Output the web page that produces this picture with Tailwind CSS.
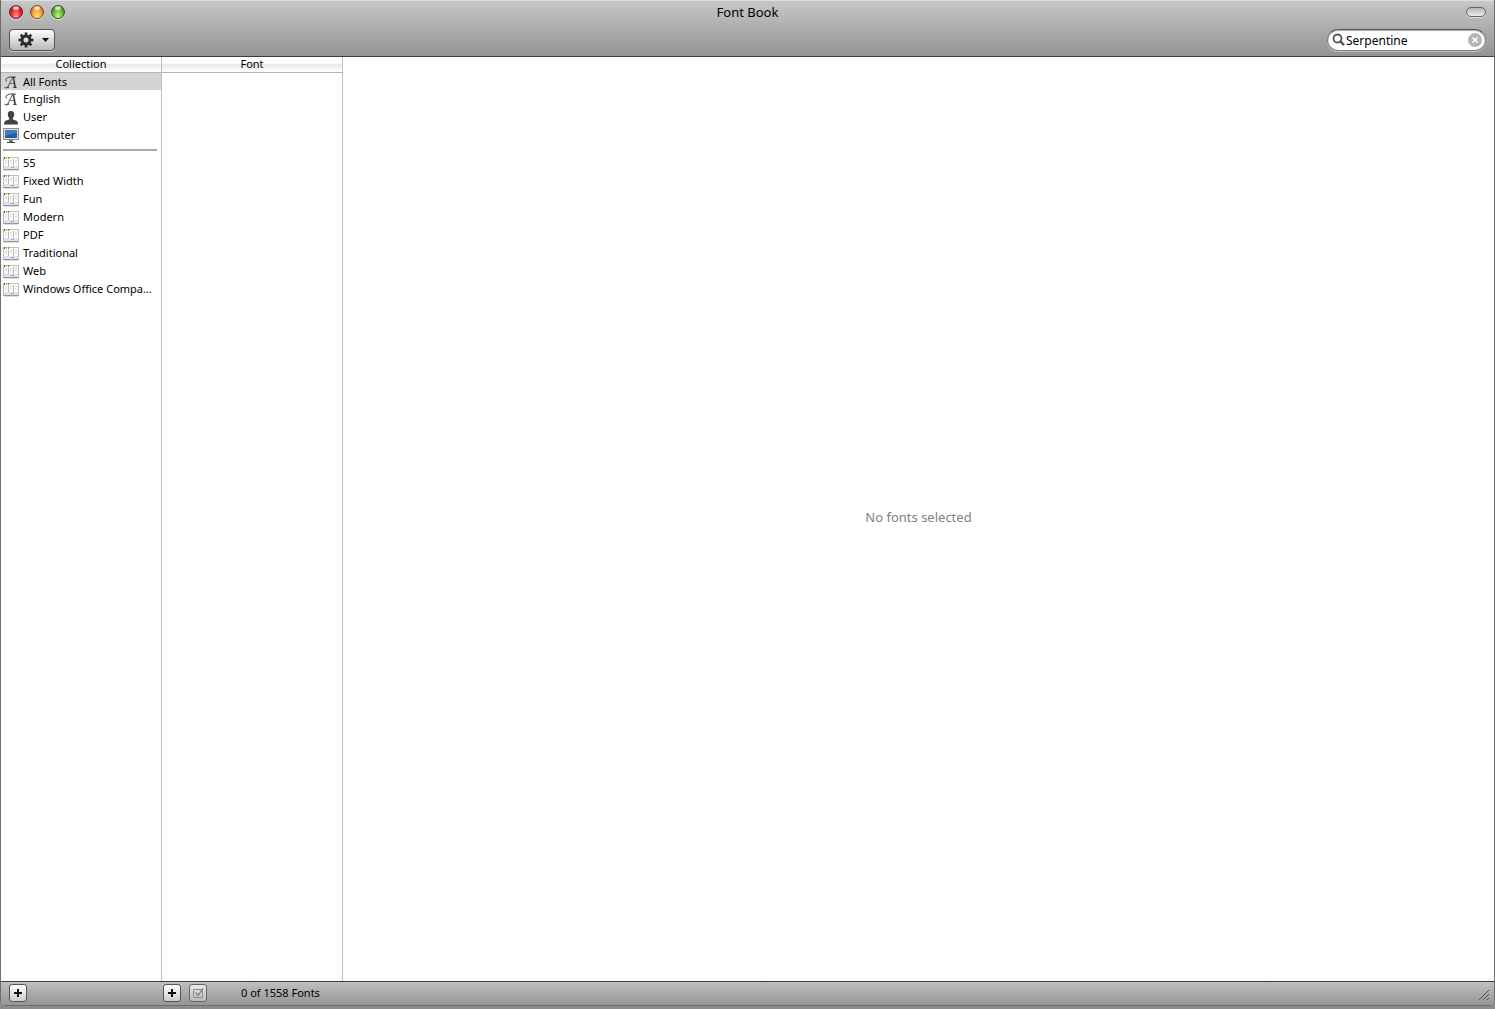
<!DOCTYPE html>
<html lang="en">

<head>
    <meta charset="UTF-8">
    <meta name="viewport" content="width=device-width, initial-scale=1.0">
    <script src="https://cdn.jsdelivr.net/npm/@tailwindcss/browser@4"></script>
    <title>Font Book</title>
</head>

<body class="h-screen overflow-hidden bg-[#8c8c8c] pb-[3px] font-['Noto_Sans','Open_Sans',sans-serif] text-[11px] text-black">
    <!-- shared icons -->
    <svg class="hidden">
        <symbol id="script-a" viewBox="0 0 16 16">
            <text x="4" y="14" font-family="Liberation Serif, serif" font-style="italic" font-size="16" fill="#333">A</text>
            <path d="M13 3.200C9 2.600 5.200 2.800 3.400 4.600c-1 1.200-.6 2.600.6 2.500M5.500 12.500c-.9 1.500-2.600 1.900-4 .8" fill="none" stroke="#444" />
        </symbol>
        <symbol id="collection" viewBox="0 0 16 16">
            <path d="M0 14h16v1H0z" fill="#999" />
            <path d="M1 15h14v1H1z" fill="#ddd" />
            <path d="M.5 2.500h15v11H.5z" fill="#fafafa" stroke="#bdbdbd" />
            <path d="M1 11h14v3H1z" fill="#e2e2e2" />
            <path d="M1 2h1v2H1z" fill="#e02020" />
            <path d="M3 2h1v2H3z" fill="#f4b90d" />
            <path d="M5 2h1v2H5z" fill="#25b535" />
            <path d="M5.500 5v6M10.500 4v7" fill="none" stroke="#bbb" />
            <path d="M2 5.500h2M7 5.500h2M12 5.500h2M2 7.500h2M7 7.500h2M12 7.500h2" fill="none" stroke="#dcdcdc" />
            <path d="M8 12h3v1H8z" fill="#78a8ee" />
        </symbol>
        <symbol id="plus" viewBox="0 0 16 16">
            <path d="M4 8h8M8 4v8" stroke="#111" stroke-width="2" />
        </symbol>
    </svg>

    <div class="flex h-full flex-col overflow-hidden rounded-b-[5px] border-x border-b border-[#6e6e6e] bg-white">
        <header class="h-[57px] shrink-0 border-b border-[#3d3d3d] bg-linear-to-b from-[#c8c8c8] to-[#939393] shadow-[inset_0_1px_0_#dedede]">
            <div class="grid h-6 grid-cols-3 items-center px-2">
                <div class="flex gap-[7px]">
                    <button aria-label="Close" class="relative size-3.5 overflow-hidden rounded-full border border-[#6d2020] bg-radial-[at_50%_85%] from-[#ff9c9c] via-[#ef3131] to-[#8c0d0d] shadow-[0_1px_0_#ddd]"><span class="absolute inset-x-[3px] top-0 h-1 rounded-full bg-white/65"></span></button>
                    <button aria-label="Minimize" class="relative size-3.5 overflow-hidden rounded-full border border-[#86481a] bg-radial-[at_50%_85%] from-[#ffe878] via-[#f8a541] to-[#a34b0b] shadow-[0_1px_0_#ddd]"><span class="absolute inset-x-[3px] top-0 h-1 rounded-full bg-white/65"></span></button>
                    <button aria-label="Zoom" class="relative size-3.5 overflow-hidden rounded-full border border-[#345f1c] bg-radial-[at_50%_85%] from-[#c9f58e] via-[#70bb3e] to-[#27600f] shadow-[0_1px_0_#ddd]"><span class="absolute inset-x-[3px] top-0 h-1 rounded-full bg-white/65"></span></button>
                </div>
                <h1 class="text-center text-[13px] leading-5">Font Book</h1>
                <button aria-label="Toggle toolbar" class="h-2.5 w-5 justify-self-end rounded-full border border-[#666] bg-linear-to-b from-[#b5b5b5] to-[#eee] shadow-[0_1px_0_#ddd]"></button>
            </div>
            <div class="flex h-8 items-center justify-between px-2">
                <button aria-label="Actions" class="flex h-[22px] w-[46px] items-center justify-between rounded border border-[#555] bg-linear-to-b from-white to-[#b8b8b8] pr-1 pl-2 shadow-[0_1px_0_#c5c5c5]">
                    <svg class="size-4" viewBox="0 0 16 16" fill="none" stroke="#2b2b2b">
                        <circle cx="8" cy="8" r="4" stroke-width="3" />
                        <path d="M8 .5v3M8 12.500v3M.5 8h3M12.500 8h3M2.700 2.700l2.100 2.100M11.200 11.200l2.100 2.100M13.300 2.700l-2.100 2.100M4.800 11.200l-2.100 2.100" stroke-width="2.6" />
                    </svg>
                    <svg class="h-1 w-[9px]" viewBox="0 0 9 4"><path d="M1 0h7L4.500 4z" fill="#111" /></svg>
                </button>
                <label class="flex h-[22px] w-[159px] items-center rounded-full border border-[#808080] border-t-[#555] bg-white pr-[3px] pl-1 shadow-[inset_0_1px_1px_#aaa,0_1px_0_#c5c5c5]">
                    <svg class="size-3.5 shrink-0" viewBox="0 0 14 14" fill="none" stroke="#555">
                        <circle cx="5.500" cy="5.500" r="4" stroke-width="1.8" />
                        <path d="M8.500 8.500l3 3" stroke-width="2.4" stroke-linecap="round" />
                    </svg>
                    <input type="text" aria-label="Search" value="Serpentine" class="w-full min-w-0 flex-1 bg-transparent pt-px text-[12px] leading-4 outline-none" />
                    <button aria-label="Clear search" class="shrink-0">
                        <svg class="size-3.5" viewBox="0 0 14 14"><circle cx="7" cy="7" r="7" fill="#b5b5b5" /><path d="M4.500 4.500l5 5M9.500 4.500l-5 5" stroke="#fff" stroke-width="1.6" /></svg>
                    </button>
                </label>
            </div>
        </header>

        <main class="flex min-h-0 flex-1">
            <nav class="w-[161px] shrink-0 border-r border-[#c0c0c0]">
                <h2 class="h-4 border-b border-[#b5b5b5] bg-linear-to-b from-white from-40% via-[#e9e9e9] via-50% to-white text-center leading-[14px]">Collection</h2>
                <ul class="leading-4">
                    <li><button class="flex h-[17px] w-full items-center gap-1 bg-[#d4d4d4] pl-0.5"><svg class="size-4" aria-hidden="true"><use href="#script-a" /></svg>All Fonts</button></li>
                    <li><button class="flex h-[18px] w-full items-center gap-1 pl-0.5"><svg class="size-4" aria-hidden="true"><use href="#script-a" /></svg>English</button></li>
                    <li>
                        <button class="flex h-[18px] w-full items-center gap-1 pl-0.5">
                            <svg class="size-4" viewBox="0 0 16 16">
                                <path d="M1 15.500c0-2 .6-3.300 2.200-3.900l3-1.200V9C5.200 8 4.800 6.600 4.800 5 4.800 3 6 2 8 2s3.200 1 3.200 3c0 1.600-.4 3-1.400 4v1.400l3 1.200c1.600.6 2.200 1.900 2.200 3.900z" fill="#424242" />
                            </svg>User
                        </button>
                    </li>
                    <li>
                        <button class="flex h-[18px] w-full items-center gap-1 pl-0.5">
                            <svg class="size-4" viewBox="0 0 16 16">
                                <path d="M.5 1.500h15v11H.5z" fill="#e2e2e2" stroke="#8a8a8a" />
                                <path d="M2 3h12v8H2z" fill="#1f5ca8" />
                                <path d="M2 3h12v3L2 9z" fill="#3c7bc0" />
                                <path d="M6 13h4v2H6z" fill="#777" />
                                <path d="M4 15h8v1H4z" fill="#444" />
                            </svg>Computer
                        </button>
                    </li>
                </ul>
                <hr class="mt-[5px] mr-1 mb-[3px] ml-0.5 border-t-2 border-[#a9a9a9]">
                <ul class="leading-4">
                    <li><button class="flex h-[18px] w-full items-center gap-1 pl-0.5"><svg class="size-4"><use href="#collection" /></svg>55</button></li>
                    <li><button class="flex h-[18px] w-full items-center gap-1 pl-0.5"><svg class="size-4"><use href="#collection" /></svg>Fixed Width</button></li>
                    <li><button class="flex h-[18px] w-full items-center gap-1 pl-0.5"><svg class="size-4"><use href="#collection" /></svg>Fun</button></li>
                    <li><button class="flex h-[18px] w-full items-center gap-1 pl-0.5"><svg class="size-4"><use href="#collection" /></svg>Modern</button></li>
                    <li><button class="flex h-[18px] w-full items-center gap-1 pl-0.5"><svg class="size-4"><use href="#collection" /></svg>PDF</button></li>
                    <li><button class="flex h-[18px] w-full items-center gap-1 pl-0.5"><svg class="size-4"><use href="#collection" /></svg>Traditional</button></li>
                    <li><button class="flex h-[18px] w-full items-center gap-1 pl-0.5"><svg class="size-4"><use href="#collection" /></svg>Web</button></li>
                    <li><button class="flex h-[18px] w-full items-center gap-1 pl-0.5 whitespace-nowrap"><svg class="size-4 shrink-0"><use href="#collection" /></svg>Windows Office Compa…</button></li>
                </ul>
            </nav>
            <section class="w-[181px] shrink-0 border-r border-[#c0c0c0]">
                <h2 class="h-4 border-b border-[#b5b5b5] bg-linear-to-b from-white from-40% via-[#e9e9e9] via-50% to-white text-center leading-[14px]">Font</h2>
            </section>
            <section class="flex flex-1 items-center justify-center pb-1">
                <p class="text-[13px] leading-5 text-[#808080]">No fonts selected</p>
            </section>
        </main>

        <footer class="flex h-6 shrink-0 items-center justify-between border-t border-[#3d3d3d] bg-linear-to-b from-[#c0c0c0] to-[#959595] pb-0.5 pl-2">
            <div class="flex items-center">
                <button aria-label="Add collection" class="mr-[136px] size-[18px] rounded-[3px] border border-[#555] bg-linear-to-b from-white to-[#ccc]"><svg class="size-4"><use href="#plus" /></svg></button>
                <button aria-label="Add font" class="mr-2 size-[18px] rounded-[3px] border border-[#555] bg-linear-to-b from-white to-[#ccc]"><svg class="size-4"><use href="#plus" /></svg></button>
                <button aria-label="Disable font" class="size-[18px] rounded-[3px] border border-[#666] bg-linear-to-b from-[#e8e8e8] to-[#bbb]">
                    <svg class="size-4" viewBox="0 0 16 16" fill="none" stroke="#8a8a8a"><path d="M3.500 4.500h9v8h-9z" /><path d="M5.500 7.500l2.500 3 5-7" stroke-width="1.5" /></svg>
                </button>
                <span class="ml-[34px] leading-4">0 of 1558 Fonts</span>
            </div>
            <svg class="mr-1 size-3 self-end mb-0.5" viewBox="0 0 12 12" stroke="#555"><path d="M1 11L11 1M5 11l6-6M9 11l2-2" /></svg>
        </footer>
    </div>
</body>

</html>
